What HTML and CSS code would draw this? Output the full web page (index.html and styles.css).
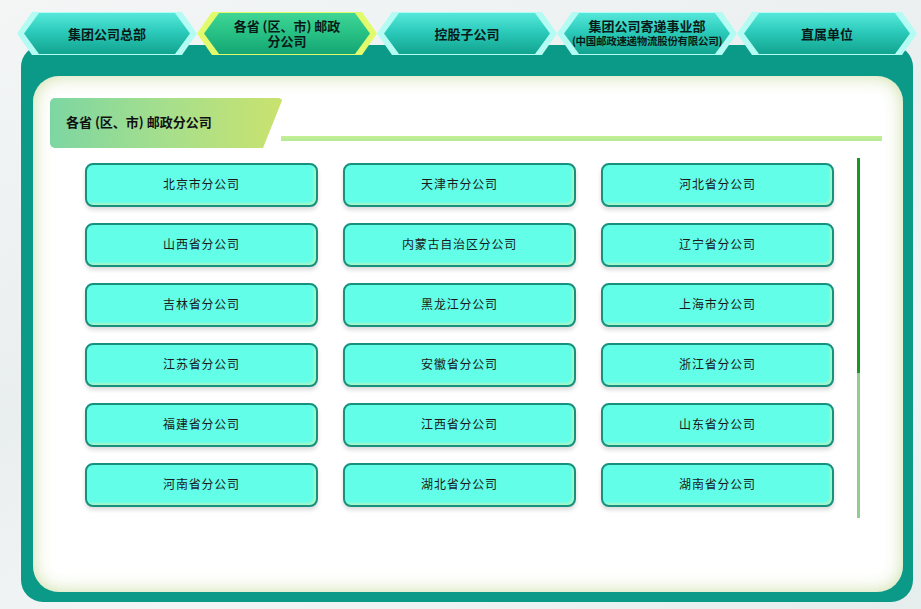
FILE: index.html
```html
<!doctype html>
<html lang="zh-CN">
<head>
    <meta charset="utf-8">
    <meta name="viewport" content="width=device-width, initial-scale=1">
    <title>分支机构</title>
    <link rel="stylesheet" href="styles.css">
</head>

<body>
    <div class="tabs">
        <div class="tab"><div class="tab-in"><span>集团公司总部</span></div></div>
        <div class="tab active"><div class="tab-in"><span>各省 (区、市) 邮政<br />分公司</span></div></div>
        <div class="tab"><div class="tab-in"><span>控股子公司</span></div></div>
        <div class="tab wide"><div class="tab-in"><span>集团公司寄递事业部<br /><span class="small">(中国邮政速递物流股份有限公司)</span></span></div></div>
        <div class="tab"><div class="tab-in"><span>直属单位</span></div></div>
    </div>

    <div class="panel">
        <div class="inner">
            <div class="head">
                <div class="head-title">各省 (区、市) 邮政分公司</div>
                <div class="head-line"></div>
            </div>

            <div class="body-row">
                <div class="list">
                    <div class="item">北京市分公司</div>
                    <div class="item">天津市分公司</div>
                    <div class="item">河北省分公司</div>
                    <div class="item">山西省分公司</div>
                    <div class="item">内蒙古自治区分公司</div>
                    <div class="item">辽宁省分公司</div>
                    <div class="item">吉林省分公司</div>
                    <div class="item">黑龙江分公司</div>
                    <div class="item">上海市分公司</div>
                    <div class="item">江苏省分公司</div>
                    <div class="item">安徽省分公司</div>
                    <div class="item">浙江省分公司</div>
                    <div class="item">福建省分公司</div>
                    <div class="item">江西省分公司</div>
                    <div class="item">山东省分公司</div>
                    <div class="item">河南省分公司</div>
                    <div class="item">湖北省分公司</div>
                    <div class="item">湖南省分公司</div>
                </div>
                <div class="scroll"><div class="thumb"></div></div>
            </div>
        </div>
    </div>
</body>
</html>
```
FILE: styles.css
```css
*,
*::after,
*::before {
  box-sizing: border-box;
}

body {
  width: 921px;
  height: 609px;
  margin: 0;
  overflow: hidden;
  background: linear-gradient(160deg, #f4f6f6 0%, #e9eeee 45%, #f2f5f5 70%, #e6eded 100%);
  font-family: "Noto Sans CJK SC", "Noto Sans", sans-serif;
  color: #111;
}

/* top tabs */
.tabs {
  display: flex;
  padding: 12px 0 0 17px;
  position: relative;
  z-index: 2;
}

.tab {
  width: 180px;
  height: 43px;
  padding: 1px 7px;
  display: flex;
  background: #b4fbf3;
  clip-path: polygon(15px 0, calc(100% - 15px) 0, 100% 50%, calc(100% - 15px) 100%, 15px 100%, 0 50%);
}

.tab-in {
  flex: 1;
  display: flex;
  align-items: center;
  justify-content: center;
  padding-bottom: 1px;
  text-align: center;
  font-size: 13px;
  font-weight: bold;
  line-height: 15px;
  color: #0a1a18;
  white-space: nowrap;
  background: linear-gradient(to bottom, #55e8da 0%, #2ccbbb 45%, #11a48f 100%);
  clip-path: polygon(15px 0, calc(100% - 15px) 0, 100% 50%, calc(100% - 15px) 100%, 15px 100%, 0 50%);
}

.tab.active {
  background: #e2fb6c;
}

.tab.active .tab-in {
  background: linear-gradient(to bottom, #3fd696 0%, #27c084 50%, #14a574 100%);
}

.tab.wide .tab-in {
  line-height: 14px;
}

.small {
  font-size: 10.5px;
  letter-spacing: -0.3px;
}

/* main panel */
.panel {
  height: 557px;
  margin: -10px 8px 0 21px;
  padding: 31px 10px 10px 12px;
  background: #0b9a88;
  border-radius: 22px;
  position: relative;
  z-index: 1;
}

.inner {
  height: 100%;
  background: #fff;
  border-radius: 26px;
  box-shadow: inset 0 0 18px rgba(175, 205, 115, 0.65);
}

.head {
  display: flex;
  align-items: flex-end;
  padding: 22px 21px 0 17px;
}

.head-title {
  width: 233px;
  height: 50px;
  padding-left: 16px;
  line-height: 48px;
  font-size: 13px;
  font-weight: bold;
  background: linear-gradient(90deg, #7dd6a2 0%, #a6df8c 50%, #cae26e 100%);
  border-radius: 5px;
  clip-path: polygon(0 0, 100% 0, calc(100% - 20px) 100%, 0 100%);
}

.head-line {
  flex: 1;
  height: 5px;
  margin: 0 0 7px -2px;
  background: linear-gradient(to bottom, #c6f094, #b2ea98);
}

/* company buttons */
.body-row {
  display: flex;
  margin: 10px 0 0 52px;
}

.list {
  height: 360px;
  padding-top: 5px;
  display: grid;
  grid-template-columns: repeat(3, 233px);
  grid-auto-rows: 44px;
  column-gap: 25px;
  row-gap: 16px;
  align-content: start;
}

.scroll {
  width: 3px;
  height: 360px;
  margin-left: 23px;
  background: #92cc92;
}

.thumb {
  height: 215px;
  background: #18981c;
}

.item {
  display: flex;
  align-items: center;
  justify-content: center;
  padding-bottom: 3px;
  font-size: 12px;
  letter-spacing: 0.8px;
  color: #1a1a1a;
  background: #62fee8;
  border: 2.5px solid #17907e;
  border-radius: 8px;
  box-shadow: inset -2px -2px 2px #a6f6c8, 0 3px 4px rgba(0, 0, 0, 0.14);
}
```
